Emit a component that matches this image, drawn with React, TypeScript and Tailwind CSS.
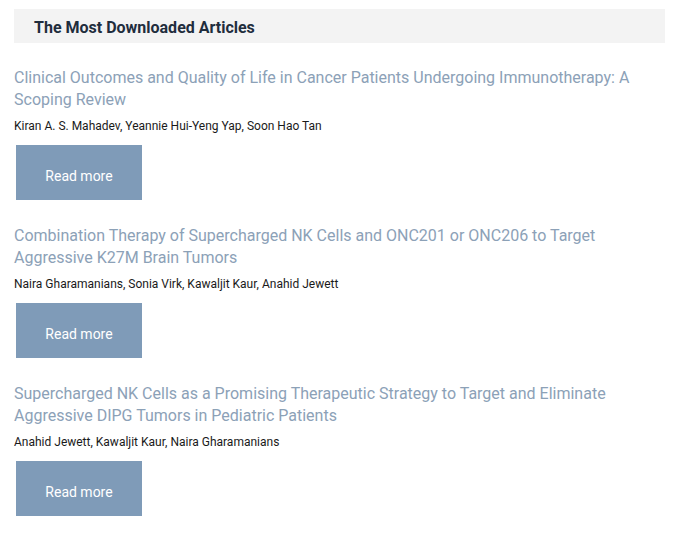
const articles = [
  {
    title:
      'Clinical Outcomes and Quality of Life in Cancer Patients Undergoing Immunotherapy: A Scoping Review',
    authors: 'Kiran A. S. Mahadev, Yeannie Hui-Yeng Yap, Soon Hao Tan',
  },
  {
    title:
      'Combination Therapy of Supercharged NK Cells and ONC201 or ONC206 to Target Aggressive K27M Brain Tumors',
    authors: 'Naira Gharamanians, Sonia Virk, Kawaljit Kaur, Anahid Jewett',
  },
  {
    title:
      'Supercharged NK Cells as a Promising Therapeutic Strategy to Target and Eliminate Aggressive DIPG Tumors in Pediatric Patients',
    authors: 'Anahid Jewett, Kawaljit Kaur, Naira Gharamanians',
  },
];

export default function App() {
  return (
    <div className="w-[681px] h-[544px] bg-white font-['Roboto',sans-serif] pl-[14px] pt-[9px]">
      <div className="w-[651px] h-[34px] bg-[#f3f3f3] flex items-center pl-[20px] pt-[3px]">
        <h2 className="text-[16px] font-bold text-[#1f2d3d]">The Most Downloaded Articles</h2>
      </div>

      <div className="flex flex-col gap-[25px] mt-[24px]">
        {articles.map((a) => (
          <div key={a.title} className="flex flex-col">
            <a href="#" className="text-[16px] leading-[22px] text-[#8ca1b7] w-[640px]">
              {a.title}
            </a>
            <p className="text-[12px] leading-[18px] text-[#1a1a1a] mt-[6px]">{a.authors}</p>
            <button className="mt-[10px] ml-[2px] w-[126px] h-[55px] bg-[#7f9bb8] text-white text-[14px] flex items-center justify-center pt-[7px]">
              Read more
            </button>
          </div>
        ))}
      </div>
    </div>
  );
}
